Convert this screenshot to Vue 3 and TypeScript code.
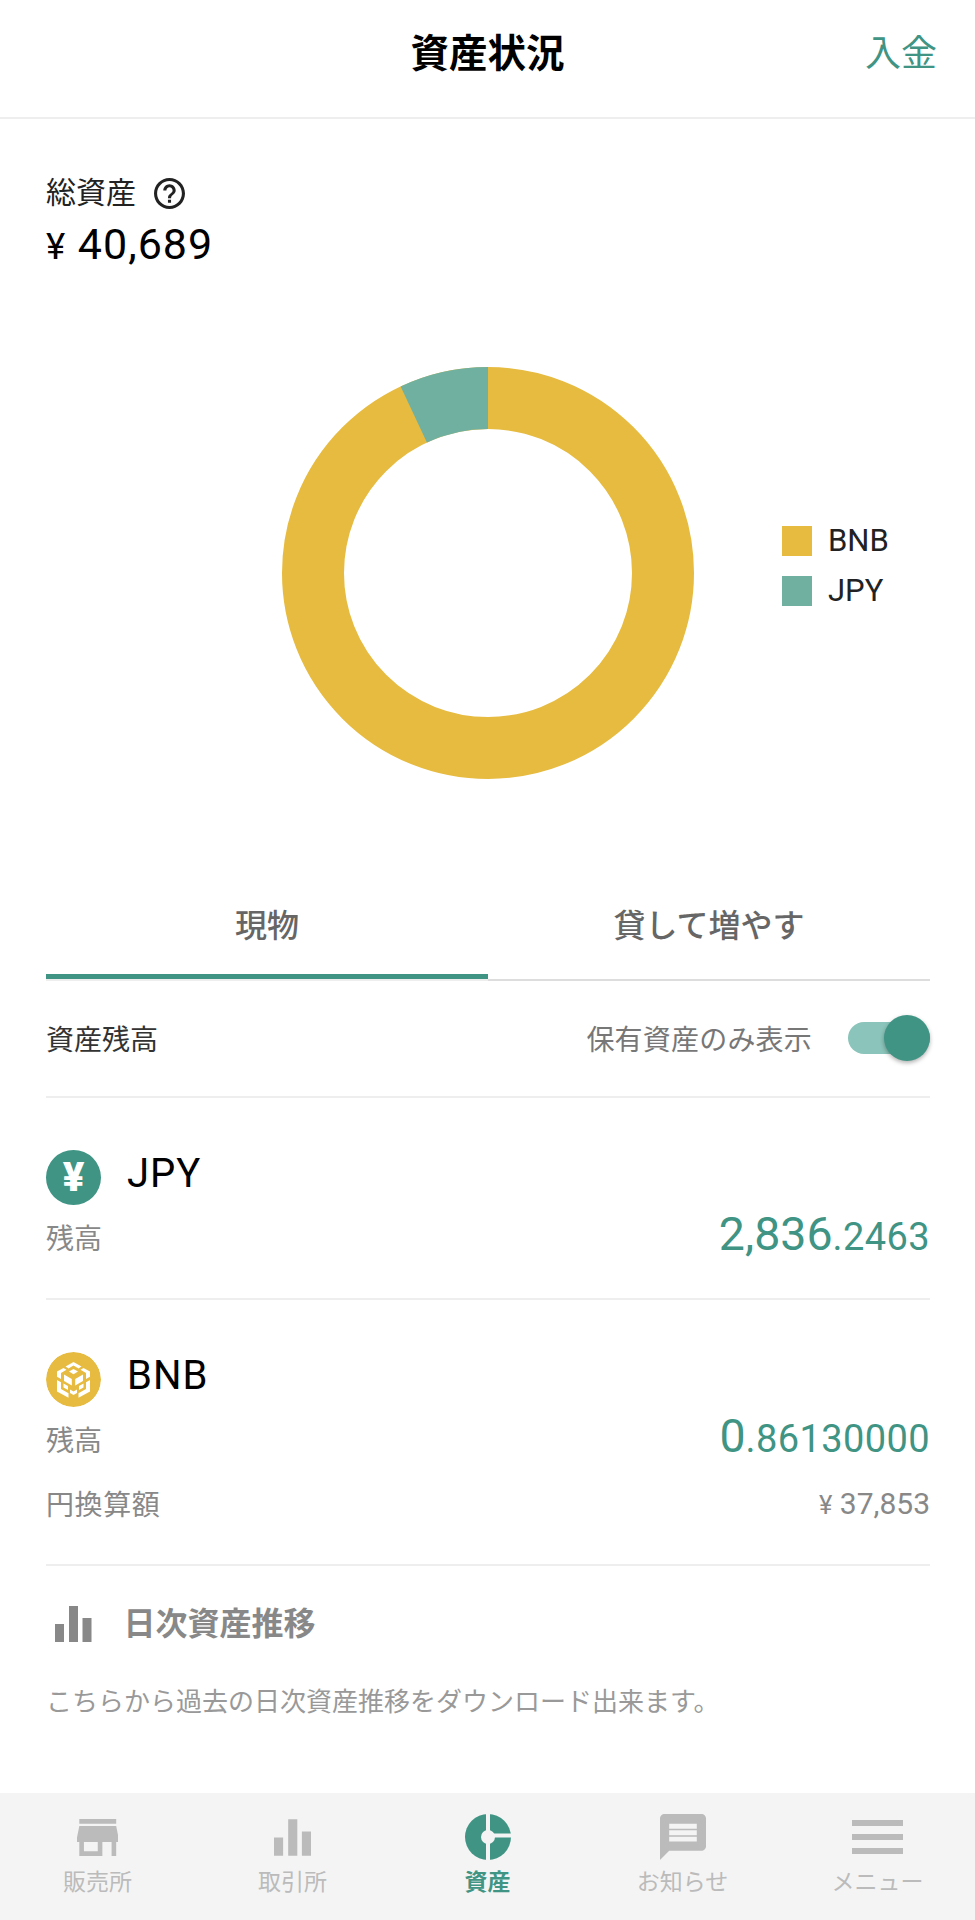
<template>
  <div class="screen">
    <header class="header">
      <span></span>
      <h1 class="title">資産状況</h1>
      <a class="deposit">入金</a>
    </header>

    <main class="main">
      <section class="summary">
        <div class="summary-label">
          総資産
          <svg class="help" viewBox="2 2 20 20" width="31" height="31">
            <path d="M11 18h2v-2h-2v2zm1-16C6.48 2 2 6.48 2 12s4.48 10 10 10 10-4.48 10-10S17.52 2 12 2zm0 18c-4.41 0-8-3.59-8-8s3.59-8 8-8 8 3.59 8 8-3.59 8-8 8zm0-14c-2.21 0-4 1.79-4 4h2c0-1.1.9-2 2-2s2 .9 2 2c0 2-3 1.75-3 5h2c0-2.25 3-2.5 3-5 0-2.21-1.79-4-4-4z" />
          </svg>
        </div>
        <div class="summary-value"><span class="yen">¥</span> 40,689</div>
      </section>

      <section class="chart">
        <span></span>
        <svg class="donut" viewBox="0 0 412 412" width="412" height="412">
          <circle cx="206" cy="206" :r="radius" fill="none" stroke="#e6bb40" stroke-width="62" />
          <circle
            cx="206"
            cy="206"
            :r="radius"
            fill="none"
            stroke="#70b0a0"
            stroke-width="62"
            :stroke-dasharray="jpyDash"
            transform="rotate(-90 206 206) scale(1 -1) translate(0 -412)"
          />
        </svg>
        <ul class="legend">
          <li v-for="l in legend" :key="l.name" class="legend-item">
            <i class="swatch" :class="l.cls"></i>{{ l.name }}
          </li>
        </ul>
      </section>

      <div class="tabs">
        <div class="tab tab-active">現物</div>
        <div class="tab">貸して増やす</div>
      </div>

      <div class="balance-head">
        <span class="balance-title">資産残高</span>
        <span class="only-held">保有資産のみ表示</span>
        <span class="toggle"><i class="knob"></i></span>
      </div>

      <section class="asset">
        <div class="asset-head">
          <span class="coin coin-jpy">¥</span>
          <span class="asset-name">JPY</span>
        </div>
        <div class="asset-row">
          <span class="row-label">残高</span>
          <span class="amount"><b>2,836</b><small>.2463</small></span>
        </div>
      </section>

      <section class="asset">
        <div class="asset-head">
          <svg class="coin" viewBox="0 0 55 55" width="55" height="55">
            <circle cx="27.5" cy="27.5" r="27.5" fill="#e6bb40" />
            <g fill="#fff">
              <path d="M27.5 10l8 4.6-3 1.8-5-2.9-5 2.9-3-1.8z" />
              <path d="M27.5 17l4.5 2.6-4.5 2.6-4.5-2.6z" />
              <path d="M24 37.5l3.5 2 3.5-2V41l-3.5 2-3.5-2z" />
              <g>
                <path d="M11 19.5l6.5-3.6 3 1.9-5.5 3.1v6l-4-2.2z" />
                <path d="M18 22.5l7.8 4.5v6.5L18 29z" />
                <path d="M11 28l4 2.2v6.8l7.5 4.2v4.6L11 39.5z" />
                <path d="M17.5 31.5l4.5 2.6V38l-4.5-2.5z" />
              </g>
              <g transform="translate(55 0) scale(-1 1)">
                <path d="M11 19.5l6.5-3.6 3 1.9-5.5 3.1v6l-4-2.2z" />
                <path d="M18 22.5l7.8 4.5v6.5L18 29z" />
                <path d="M11 28l4 2.2v6.8l7.5 4.2v4.6L11 39.5z" />
                <path d="M17.5 31.5l4.5 2.6V38l-4.5-2.5z" />
              </g>
            </g>
          </svg>
          <span class="asset-name">BNB</span>
        </div>
        <div class="asset-row">
          <span class="row-label">残高</span>
          <span class="amount"><b>0</b><small>.86130000</small></span>
        </div>
        <div class="asset-row asset-row-sub">
          <span class="row-label row-label-wide">円換算額</span>
          <span class="jpy-value"><span class="yen">¥</span> 37,853</span>
        </div>
      </section>

      <section class="daily">
        <div class="daily-head">
          <svg viewBox="0 0 36.5 36" width="36.5" height="36">
            <path d="M0 18h9v18H0zM14 0h9v36h-9zM27.5 12h9v24h-9z" fill="#888" />
          </svg>
          <h2 class="daily-title">日次資産推移</h2>
        </div>
        <p class="daily-desc">こちらから過去の日次資産推移をダウンロード出来ます。</p>
        <div class="daily-link">年次</div>
      </section>
    </main>

    <nav class="nav">
      <div v-for="item in nav" :key="item.label" class="nav-item" :class="{ 'nav-active': item.active }">
        <div class="nav-icon">
          <svg v-if="item.icon === 'store'" viewBox="3 4 18 16" width="41.5" height="37">
            <path d="M20 4H4v2h16V4zm1 10v-2l-1-5H4l-1 5v2h1v6h10v-6h4v6h2v-6h1zm-9 4H6v-4h6v4z" />
          </svg>
          <svg v-else-if="item.icon === 'bars'" viewBox="0 0 36.5 36" width="37" height="37">
            <path d="M0 18h9v18H0zM14 0h9v36h-9zM27.5 12h9v24h-9z" />
          </svg>
          <svg v-else-if="item.icon === 'pie'" viewBox="0 0 46 46" width="46" height="46">
            <circle cx="23" cy="23" r="23" fill="#3f9484" />
            <path d="M23 0v46M23 21.5h23" stroke="#f4f4f4" stroke-width="4" />
            <circle cx="23" cy="23" r="7" fill="#f4f4f4" />
          </svg>
          <svg v-else-if="item.icon === 'chat'" viewBox="2 2 20 20" width="46" height="46">
            <path d="M20 2H4c-1.1 0-2 .9-2 2v18l4-4h14c1.1 0 2-.9 2-2V4c0-1.1-.9-2-2-2z" />
            <path d="M6 6.2h12v2.2H6zM6 9.1h12v2.1H6zM6 11.9h12V14H6z" fill="#f4f4f4" />
          </svg>
          <svg v-else viewBox="0 0 51 34" width="51" height="34">
            <path d="M0 0h51v6H0zM0 14h51v6H0zM0 28h51v6H0z" />
          </svg>
        </div>
        <span class="nav-label">{{ item.label }}</span>
      </div>
    </nav>
  </div>
</template>

<script setup lang="ts">
import { computed } from 'vue'

const radius = 175
const jpyShare = 2836.2463 / 40689

const jpyDash = computed(() => {
  const full = 2 * Math.PI * radius
  return `${full * jpyShare} ${full}`
})

const legend = [
  { name: 'BNB', cls: 'swatch-bnb' },
  { name: 'JPY', cls: 'swatch-jpy' },
]

const nav = [
  { label: '販売所', icon: 'store', active: false },
  { label: '取引所', icon: 'bars', active: false },
  { label: '資産', icon: 'pie', active: true },
  { label: 'お知らせ', icon: 'chat', active: false },
  { label: 'メニュー', icon: 'menu', active: false },
]
</script>

<style>
html,
body {
  margin: 0;
  padding: 0;
  background: #fff;
}
</style>

<style scoped>
* {
  box-sizing: border-box;
  margin: 0;
  padding: 0;
}

.screen {
  width: 975px;
  height: 1920px;
  display: flex;
  flex-direction: column;
  overflow: hidden;
  background: #fff;
  color: #000;
  font-family: Roboto, "Noto Sans CJK JP", sans-serif;
}

.header {
  flex: none;
  height: 119px;
  display: grid;
  grid-template-columns: 1fr auto 1fr;
  align-items: center;
  padding: 0 38px 10px;
  border-bottom: 2px solid #eee;
}

.title {
  font-size: 38.5px;
  font-weight: 700;
  line-height: 50px;
}

.deposit {
  justify-self: end;
  font-size: 36px;
  line-height: 50px;
  color: #3f9484;
}

.main {
  flex: 1;
  min-height: 0;
  overflow: hidden;
  padding: 0 45px 0 46px;
}

.summary {
  padding-top: 56px;
}

.summary-label {
  display: flex;
  align-items: center;
  gap: 18px;
  font-size: 30px;
  line-height: 36px;
  color: #222;
}

.help {
  fill: #222;
}

.summary-value {
  margin-top: 8px;
  font-size: 43px;
  line-height: 50px;
  letter-spacing: 1px;
}

.yen {
  font-size: 0.85em;
  line-height: 1;
}

.chart {
  margin-top: 98px;
  display: grid;
  grid-template-columns: 1fr 412px 1fr;
  align-items: center;
}

.donut {
  display: block;
}

.legend {
  list-style: none;
  display: flex;
  flex-direction: column;
  gap: 20px;
  padding: 0 0 14px 88px;
}

.legend-item {
  display: flex;
  align-items: center;
  gap: 16px;
  font-size: 31px;
  line-height: 30px;
  color: #222;
}

.swatch {
  width: 30px;
  height: 30px;
}

.swatch-bnb {
  background: #e6bb40;
}

.swatch-jpy {
  background: #70b0a0;
}

.tabs {
  margin-top: 93px;
  display: grid;
  grid-template-columns: 1fr 1fr;
  border-bottom: 2px solid #ddd;
}

.tab {
  height: 107px;
  display: flex;
  align-items: center;
  justify-content: center;
  border-bottom: 5px solid transparent;
  font-size: 32px;
  font-weight: 500;
  color: #666;
}

.tab-active {
  border-bottom-color: #3f9484;
  box-shadow: 0 2px 0 #eee;
}

.balance-head {
  height: 117px;
  padding-bottom: 2px;
  display: flex;
  align-items: center;
  border-bottom: 2px solid #eee;
}

.balance-title {
  flex: 1;
  font-size: 28px;
  color: #333;
}

.only-held {
  font-size: 28px;
  letter-spacing: 0.2px;
  color: #777;
}

.toggle {
  position: relative;
  width: 82px;
  height: 32px;
  margin-left: 36px;
  border-radius: 16px;
  background: #8bc4ba;
}

.knob {
  position: absolute;
  top: -7px;
  right: 0;
  width: 46px;
  height: 46px;
  border-radius: 50%;
  background: #3f9484;
  box-shadow: 0 2px 4px rgba(0, 0, 0, 0.3);
}

.asset {
  padding: 52px 0 36px;
  border-bottom: 2px solid #eee;
}

.asset-head {
  display: flex;
  align-items: center;
  gap: 26px;
  height: 55px;
}

.coin {
  flex: none;
  display: block;
  width: 55px;
  height: 55px;
  border-radius: 50%;
}

.coin-jpy {
  display: flex;
  align-items: center;
  justify-content: center;
  background: #3f9484;
  color: #fff;
  font-size: 40px;
  font-weight: 900;
}

.asset-name {
  margin-top: -8px;
  font-size: 40px;
  letter-spacing: 1px;
}

.asset-row {
  margin-top: 7px;
  height: 50px;
  display: flex;
  align-items: center;
  justify-content: space-between;
}

.asset-row-sub {
  margin-top: 14px;
}

.row-label {
  font-size: 28px;
  color: #888;
}

.row-label-wide {
  letter-spacing: 0.6px;
}

.amount {
  margin-top: -4px;
  color: #3f9484;
  font-size: 46.5px;
  line-height: 50px;
}

.amount b {
  font-weight: 400;
}

.amount small {
  font-size: 38px;
  letter-spacing: 0.4px;
}

.jpy-value {
  font-size: 30px;
  color: #888;
}

.daily {
  padding-top: 40px;
}

.daily-head {
  display: flex;
  align-items: center;
  height: 36px;
  padding-left: 9px;
}

.daily-title {
  margin-left: 32px;
  margin-top: -7px;
  font-size: 32px;
  font-weight: 700;
  color: #888;
}

.daily-desc {
  margin-top: 40px;
  font-size: 26px;
  line-height: 40px;
  color: #999;
  white-space: nowrap;
}

.daily-link {
  margin-top: 67px;
  padding-left: 79px;
  font-size: 28px;
  line-height: 40px;
}

.nav {
  flex: none;
  height: 127px;
  display: grid;
  grid-template-columns: repeat(5, 1fr);
  background: #f4f4f4;
}

.nav-item {
  display: flex;
  flex-direction: column;
  align-items: center;
  padding-top: 20px;
  fill: #bbb;
  color: #bbb;
}

.nav-icon {
  height: 48px;
  display: flex;
  align-items: center;
  justify-content: center;
}

.nav-label {
  margin-top: 7px;
  font-size: 23px;
  line-height: 30px;
}

.nav-active {
  color: #3f9484;
}

.nav-active .nav-label {
  font-weight: 700;
}
</style>
